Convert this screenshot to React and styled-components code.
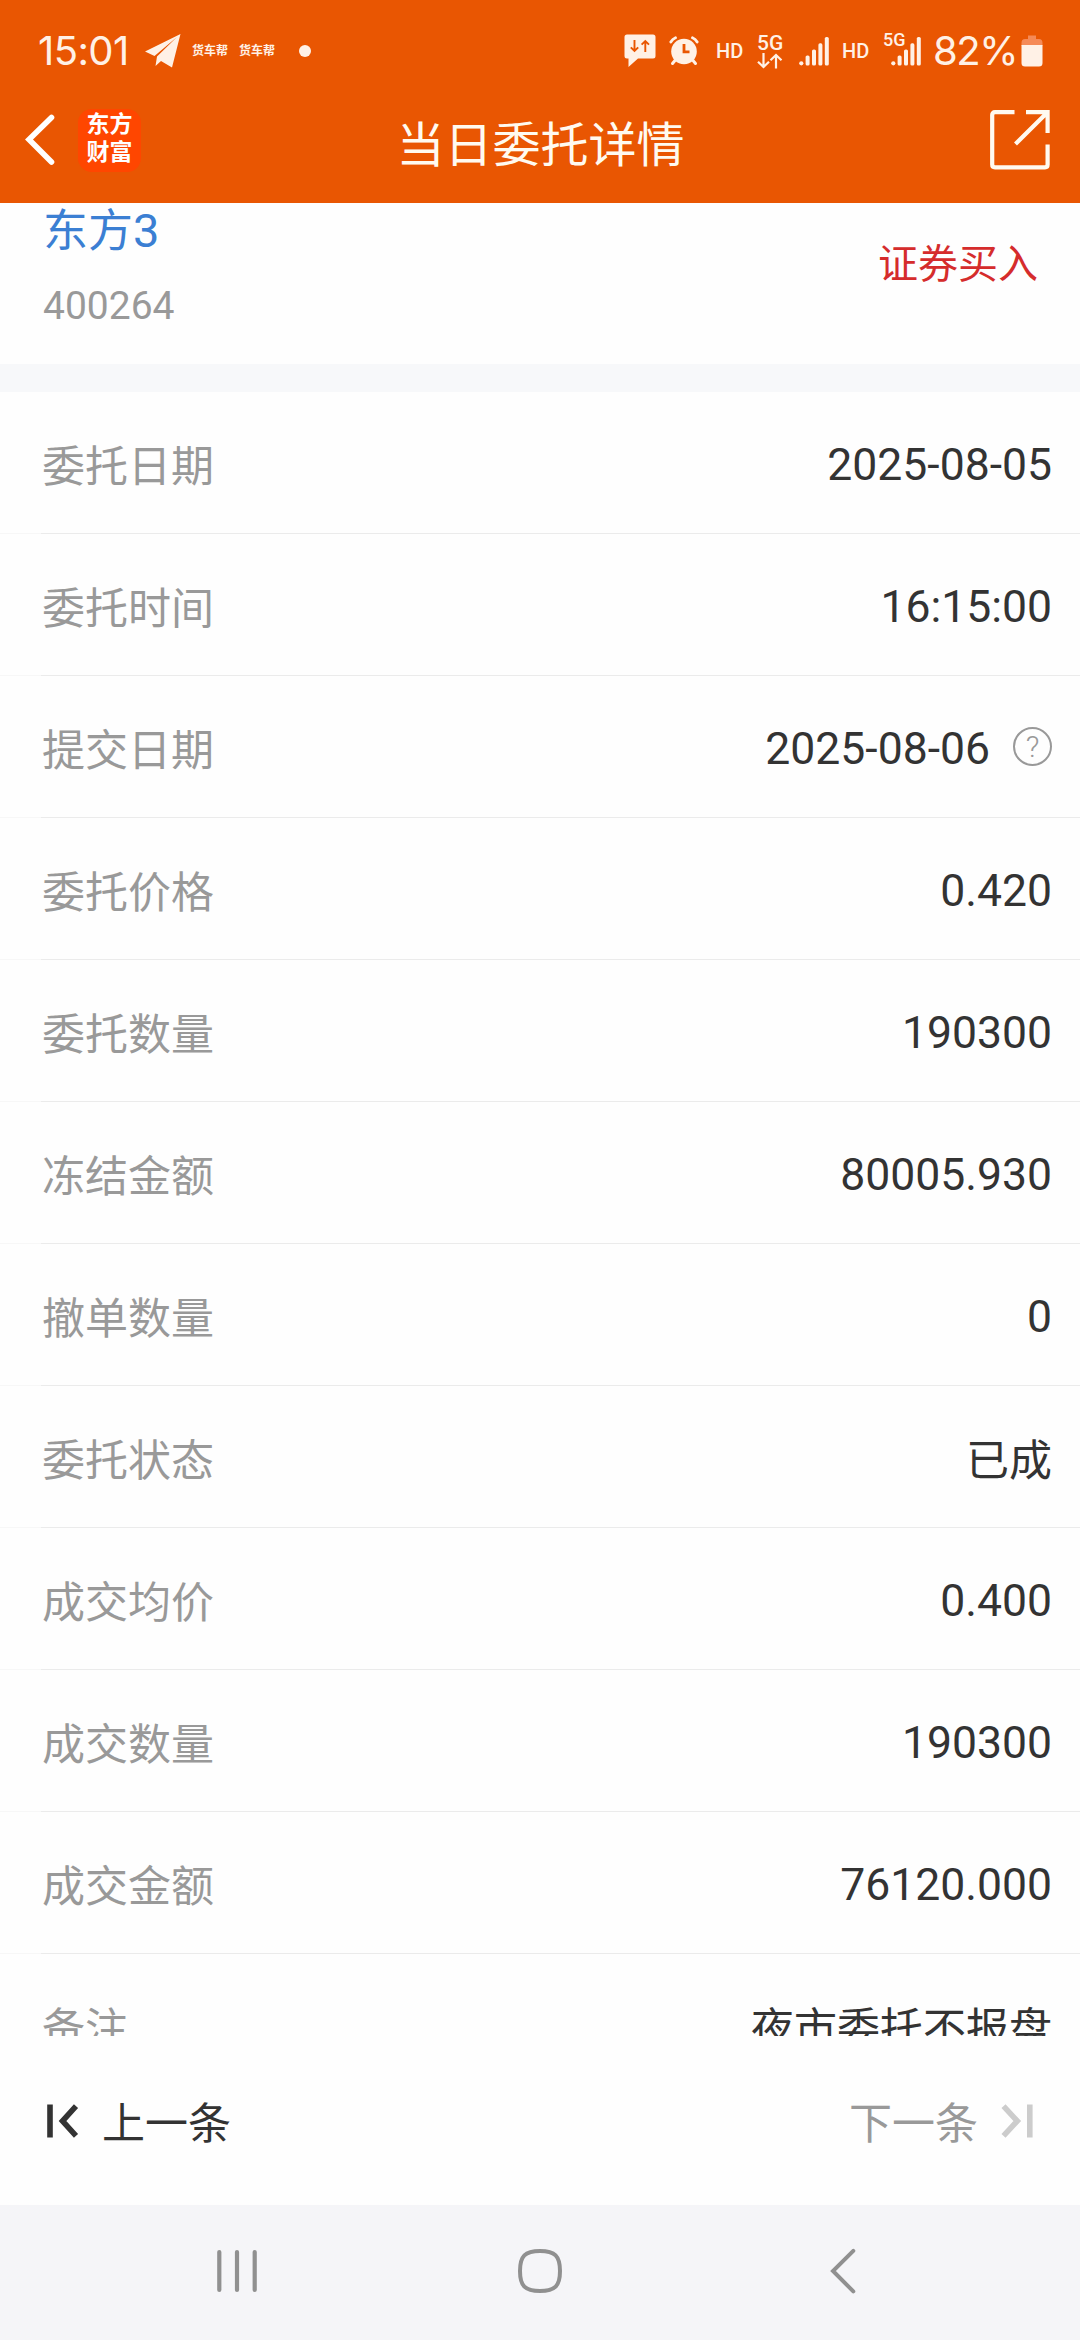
import React from "react";
import styled, { createGlobalStyle } from "styled-components";

// 당일 위탁 상세 데이터
const rows = [
  { label: "委托日期", value: "2025-08-05" },
  { label: "委托时间", value: "16:15:00" },
  { label: "提交日期", value: "2025-08-06", help: true },
  { label: "委托价格", value: "0.420" },
  { label: "委托数量", value: "190300" },
  { label: "冻结金额", value: "80005.930" },
  { label: "撤单数量", value: "0" },
  { label: "委托状态", value: "已成", cjk: true },
  { label: "成交均价", value: "0.400" },
  { label: "成交数量", value: "190300" },
  { label: "成交金额", value: "76120.000" },
  { label: "备注", value: "夜市委托不报盘", cjk: true },
];

const cream = "#fff1e6";

const PlaneIcon = () => (
  <svg width="36" height="34" viewBox="0 0 36 34" fill={cream}>
    <path d="M35.5 0 L0 17.5 L9.5 22 L32 3 L12 22.5 L10.5 32 L16 27 L27 33.5 Z" />
  </svg>
);

const NoticeIcon = () => (
  <svg width="32" height="34" viewBox="0 0 32 34">
    <path d="M3 0.5 H29 Q31.5 0.5 31.5 3 V22 Q31.5 24.5 29 24.5 H14 L4.5 33 V24.5 H3 Q0.5 24.5 0.5 22 V3 Q0.5 0.5 3 0.5 Z" fill={cream} />
    <path d="M10.5 6 V17 M6.8 13.3 L10.5 17 L14.2 13.3 M21.3 18 V7 M17.6 10.7 L21.3 7 L25 10.7" fill="none" stroke="#e95602" strokeWidth="1.9" />
  </svg>
);

const AlarmIcon = () => (
  <svg width="30" height="30" viewBox="0 0 30 30" fill="none" stroke={cream} strokeLinecap="round">
    <circle cx="15" cy="15.5" r="12.8" fill={cream} stroke="none" />
    <path d="M1.8 6 Q3.5 3 6.5 1.8 M28.2 6 Q26.5 3 23.5 1.8" strokeWidth="2.8" />
    <path d="M6 24.5 L3.5 27.5 M24 24.5 L26.5 27.5" strokeWidth="3" />
    <path d="M15 8 V15.8 H20.5" stroke="#e95602" strokeWidth="2.8" strokeLinecap="butt" />
  </svg>
);

const ArrowsIcon = () => (
  <svg width="26" height="16" viewBox="0 0 26 16" fill="none" stroke={cream} strokeWidth="2.2">
    <path d="M6.5 0 V14 M1 8.7 L6.5 14 L12 8.7 M19 15.5 V2 M13.5 7.3 L19 2 L24.5 7.3" />
  </svg>
);

const SignalIcon = () => (
  <svg width="30" height="30" viewBox="0 0 30 30" fill={cream}>
    <circle cx="2.3" cy="27.3" r="2.1" />
    <rect x="6.6" y="19.5" width="4" height="10" rx="1.6" />
    <rect x="13" y="13.5" width="4" height="16" rx="1.6" />
    <rect x="19.4" y="7.3" width="4" height="22.2" rx="1.6" />
    <rect x="25.8" y="1" width="4" height="28.5" rx="1.6" />
  </svg>
);

const BatteryIcon = () => (
  <svg width="22" height="32" viewBox="0 0 22 32">
    <path d="M7 0.5 H15 V4 H18 Q21.5 4 21.5 8 V11 H0.5 V8 Q0.5 4 4 4 H7 Z" fill="#f58a57" />
    <path d="M0.5 10 H21.5 V28 Q21.5 31.5 18 31.5 H4 Q0.5 31.5 0.5 28 Z" fill={cream} />
  </svg>
);

const BackIcon = () => (
  <svg width="32" height="52" viewBox="0 0 32 52" fill="none" stroke="#fff" strokeWidth="5.6" strokeLinecap="round">
    <path d="M27.5 3.5 L5 25.5 L27.5 48" />
  </svg>
);

const ShareIcon = () => (
  <svg width="60" height="60" viewBox="0 0 60 60" fill="none" stroke="#fffaf0" strokeWidth="4.2">
    <path d="M24.5 2.2 H5 Q2.2 2.2 2.2 5 V54.5 Q2.2 57.3 5 57.3 H55 Q57.6 57.3 57.6 54.5 V34.5" />
    <path d="M36 2.2 H57.6 V23 M57 2.8 L25.5 34" />
  </svg>
);

const FirstIcon = () => (
  <svg width="32" height="34" viewBox="0 0 32 34" fill="none" stroke="#333" strokeWidth="5.6">
    <path d="M3 0.5 V33.5 M29 2.2 L15.5 17 L29 31.8" />
  </svg>
);

const LastIcon = () => (
  <svg width="32" height="34" viewBox="0 0 32 34" fill="none" stroke="#ccc" strokeWidth="5.6">
    <path d="M28.8 0.5 V33.5 M2.5 2.2 L16.3 17 L2.5 31.8" />
  </svg>
);

const App = () => {
  return (
    <>
      <GlobalStyle />
      <Screen>
        <Header>
          <StatusBar>
            <Clock>15:01</Clock>
            <PlaneIcon />
            <TruckText>货车帮</TruckText>
            <TruckText>货车帮</TruckText>
            <Dot />
            <StatusRight>
              <Notices>
                <NoticeIcon />
                <AlarmIcon />
              </Notices>
              <Hd>HD</Hd>
              <Network>
                <NetworkText>5G</NetworkText>
                <ArrowsIcon />
              </Network>
              <SignalIcon />
              <Hd>HD</Hd>
              <SecondSim>
                <SimText>5G</SimText>
                <SignalIcon />
              </SecondSim>
              <Percent>82%</Percent>
              <BatteryIcon />
            </StatusRight>
          </StatusBar>
          <TitleBar>
            <TitleSide>
              <BackIcon />
              <AppLogo>
                <span>东方</span>
                <span>财富</span>
              </AppLogo>
            </TitleSide>
            <Title>当日委托详情</Title>
            <TitleSide $end>
              <ShareIcon />
            </TitleSide>
          </TitleBar>
        </Header>

        <Content>
          <Stock>
            <div>
              <StockName>
                东方<StockDigit>3</StockDigit>
              </StockName>
              <StockCode>400264</StockCode>
            </div>
            <TradeType>证券买入</TradeType>
          </Stock>
          <Divider />
          {rows.map((row) => (
            <Row key={row.label}>
              <Label>{row.label}</Label>
              <Value $cjk={row.cjk}>{row.value}</Value>
              {row.help && <Help>?</Help>}
            </Row>
          ))}
        </Content>

        <Pager>
          <PageButton>
            <FirstIcon />
            <PageText>上一条</PageText>
          </PageButton>
          <PageButton $disabled>
            <PageText>下一条</PageText>
            <LastIcon />
          </PageButton>
        </Pager>

        <NavBar>
          <NavKey>
            <svg width="42" height="44" viewBox="0 0 42 44" stroke="#909090" strokeWidth="4.2" strokeLinecap="round">
              <path d="M3.3 3 V41 M21 3 V41 M38.7 3 V41" />
            </svg>
          </NavKey>
          <NavKey>
            <svg width="44" height="44" viewBox="0 0 44 44" fill="none" stroke="#909090" strokeWidth="4">
              <path d="M22 2 C37 2 42 7 42 22 C42 37 37 42 22 42 C7 42 2 37 2 22 C2 7 7 2 22 2 Z" />
            </svg>
          </NavKey>
          <NavKey>
            <svg width="26" height="46" viewBox="0 0 26 46" fill="none" stroke="#909090" strokeWidth="4" strokeLinecap="round">
              <path d="M23.3 2.8 L3 23 L23.3 43.4" />
            </svg>
          </NavKey>
        </NavBar>
      </Screen>
    </>
  );
};

const GlobalStyle = createGlobalStyle`
  body {
    margin: 0;
    background: #fefefe;
    font-family: Roboto, "Noto Sans CJK SC", sans-serif;
  }

  svg {
    display: block;
    flex: none;
  }
`;

const Screen = styled.div`
  display: flex;
  flex-direction: column;
  width: 1080px;
  height: 2340px;
  overflow: hidden;
`;

const Header = styled.header`
  flex: none;
  height: 203px;
  background: #e95602;
`;

const StatusBar = styled.div`
  display: flex;
  align-items: center;
  height: 102px;
  padding: 0 37px 0 38px;
  color: ${cream};
`;

const Clock = styled.span`
  width: 107px;
  padding-bottom: 2px;
  font-family: Inter, sans-serif;
  font-size: 40px;
  letter-spacing: -0.6px;
`;

const TruckText = styled.span`
  width: 36px;
  margin-left: 11px;
  font-size: 12px;
  font-weight: 700;
  line-height: 14px;
  white-space: nowrap;
`;

const Dot = styled.i`
  width: 12px;
  height: 12px;
  margin-left: 24px;
  border-radius: 50%;
  background: ${cream};
`;

const StatusRight = styled.div`
  display: flex;
  align-items: center;
  margin-left: auto;
`;

const Notices = styled.div`
  display: flex;
  align-items: center;
  gap: 13px;
  margin-right: 4px;
`;

const Hd = styled.span`
  width: 27px;
  margin: 0 14px 0 13px;
  font-size: 20px;
  font-weight: 500;
`;

const Network = styled.div`
  display: flex;
  flex-direction: column;
  width: 26px;
  margin-right: 16px;
`;

const NetworkText = styled.span`
  font-size: 21px;
  font-weight: 500;
  line-height: 19px;
`;

const SecondSim = styled.div`
  display: flex;
  margin-right: 12px;
`;

const SimText = styled.span`
  width: 8px;
  font-size: 18px;
  font-weight: 500;
  line-height: 7px;
`;

const Percent = styled.span`
  width: 88px;
  padding-bottom: 2px;
  font-family: Inter, sans-serif;
  font-size: 40px;
  letter-spacing: -1.5px;
`;

const TitleBar = styled.div`
  display: flex;
  align-items: center;
  justify-content: space-between;
  height: 76px;
  padding: 0 30px 0 24px;
`;

const TitleSide = styled.div`
  display: flex;
  align-items: center;
  justify-content: ${(props) => (props.$end ? "flex-end" : "flex-start")};
  gap: 22px;
  width: 180px;
`;

const AppLogo = styled.div`
  display: flex;
  flex-direction: column;
  align-items: center;
  justify-content: center;
  box-sizing: border-box;
  width: 63px;
  height: 63px;
  padding-bottom: 2px;
  border-radius: 14px;
  background: #ff4600;
  color: #fff;
  font-size: 23px;
  font-weight: 700;
  line-height: 28px;
`;

const Title = styled.h1`
  margin: 0;
  padding: 11px 0 0 7px;
  color: #fffaf0;
  font-size: 48px;
  font-weight: 400;
  line-height: 65px;
`;

const Content = styled.main`
  flex: none;
  height: 1833px;
  overflow: hidden;
`;

const Stock = styled.section`
  display: flex;
  justify-content: space-between;
  box-sizing: border-box;
  height: 161px;
  padding: 2px 42px 0 43px;
`;

const StockName = styled.div`
  height: 52px;
  color: #3b7fd3;
  font-size: 45px;
  line-height: 52px;
`;

const StockDigit = styled.span`
  font-size: 47px;
`;

const StockCode = styled.div`
  margin-top: 26px;
  color: #999;
  font-size: 39px;
  line-height: 46px;
`;

const TradeType = styled.div`
  padding-top: 30px;
  color: #d52c2c;
  font-size: 40px;
  line-height: 60px;
`;

const Divider = styled.div`
  height: 28px;
  background: #f7f8fa;
`;

const Row = styled.div`
  display: flex;
  align-items: center;
  box-sizing: border-box;
  height: 142px;
  padding: 0 28px 0 42px;
  border-bottom: 1px solid;
  border-image: linear-gradient(to right, #f7f7f7 42px, #ebebeb 42px) 1;
`;

const Label = styled.span`
  padding-top: 8px;
  color: #999;
  font-size: 43px;
  line-height: 60px;
`;

const Value = styled.span`
  margin-left: auto;
  padding-top: ${(props) => (props.$cjk ? "8px" : "5px")};
  color: #333;
  font-size: ${(props) => (props.$cjk ? "43px" : "44.5px")};
  line-height: 60px;
`;

const Help = styled.span`
  box-sizing: border-box;
  width: 39px;
  height: 39px;
  margin-left: 23px;
  border: 2px solid #999;
  border-radius: 50%;
  color: #999;
  font-size: 30px;
  font-weight: 300;
  line-height: 36px;
  text-align: center;
`;

const Pager = styled.footer`
  display: flex;
  flex: none;
  align-items: center;
  justify-content: space-between;
  height: 169px;
  padding: 0 47px;
`;

const PageButton = styled.div`
  display: flex;
  align-items: center;
  gap: 23px;
  color: ${(props) => (props.$disabled ? "#999" : "#333")};
`;

const PageText = styled.span`
  padding-top: 7px;
  font-size: 43px;
  line-height: 60px;
`;

const NavBar = styled.nav`
  display: flex;
  flex: none;
  align-items: center;
  justify-content: center;
  box-sizing: border-box;
  height: 135px;
  padding-bottom: 3px;
  background: #f5f5f8;
`;

const NavKey = styled.div`
  display: flex;
  justify-content: center;
  width: 303px;
`;

export default App;
